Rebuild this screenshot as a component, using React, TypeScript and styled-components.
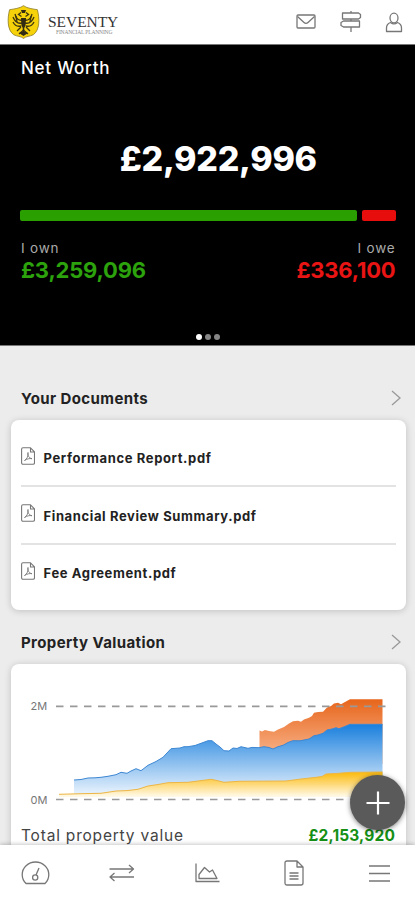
import React from "react";
import styled, { createGlobalStyle } from "styled-components";

const Global = createGlobalStyle`
  * { box-sizing: border-box; }
  body { margin: 0; background: #ececec; font-family: Inter, "Liberation Sans", sans-serif; }
  svg { display: block; flex: none; }
`;

const Screen = styled.div`
  position: relative;
  width: 415px;
  height: 900px;
  display: flex;
  flex-direction: column;
  overflow: hidden;
  background: #ececec;
`;

const Header = styled.header`
  height: 45px;
  flex: none;
  display: flex;
  justify-content: space-between;
  padding: 0 12px 0 7px;
  background: #fff;
  border-bottom: 1px solid #777;
`;

const Brand = styled.div`
  display: flex;
  gap: 8px;
  padding-top: 5px;
`;

const BrandText = styled.div`
  display: flex;
  flex-direction: column;
  padding-top: 8px;
  font-family: "Liberation Serif", serif;
  white-space: nowrap;
`;

const BrandName = styled.span`
  font-size: 15.5px;
  line-height: 17px;
  letter-spacing: -0.05px;
  color: #333;
`;

const BrandTagline = styled.span`
  padding-left: 8px;
  font-size: 5.5px;
  line-height: 5px;
  letter-spacing: -0.15px;
  color: #888;
`;

const HeaderIcons = styled.div`
  display: flex;
  align-items: flex-start;
  gap: 23.5px;
  padding-top: 10px;
`;

const Hero = styled.section`
  height: 301px;
  flex: none;
  display: flex;
  flex-direction: column;
  padding: 13px 19.5px 0 20px;
  background: #000;
  color: #fff;
  border-bottom: 1px solid #777;
`;

const Title = styled.h1`
  margin: 0 0 0 1px;
  font-size: 17px;
  line-height: 20px;
  font-weight: 500;
  letter-spacing: 0.75px;
`;

const NetWorth = styled.div`
  margin-top: 61px;
  padding-left: 21px;
  text-align: center;
  font-size: 34px;
  line-height: 40px;
  font-weight: 800;
  letter-spacing: -0.3px;
`;

const Split = styled.div`
  display: flex;
  gap: 5px;
  height: 11px;
  margin-top: 31px;
`;

const Share = styled.div<{ $weight: number; $color: string }>`
  flex: ${(p) => p.$weight} 0 0;
  border-radius: 2px;
  background: ${(p) => p.$color};
`;

const Totals = styled.div`
  display: flex;
  justify-content: space-between;
  margin: 19px 0 0 1px;
`;

const Total = styled.div<{ $align: "left" | "right" }>`
  display: flex;
  flex-direction: column;
  text-align: ${(p) => p.$align};
`;

const TotalLabel = styled.span`
  font-size: 13.5px;
  line-height: 17px;
  letter-spacing: 0.8px;
  color: #aaa;
`;

const TotalValue = styled.span<{ $color: string }>`
  font-size: 22px;
  line-height: 26px;
  font-weight: 700;
  letter-spacing: -0.2px;
  color: ${(p) => p.$color};
`;

const Dots = styled.div`
  display: flex;
  justify-content: center;
  gap: 3px;
  margin-top: 51px;
`;

const Dot = styled.i<{ $active?: boolean }>`
  width: 6px;
  height: 6px;
  border-radius: 50%;
  background: ${(p) => (p.$active ? "#fff" : "#858585")};
`;

const Content = styled.main`
  flex: 1;
  min-height: 0;
  padding: 40px 9.5px 0 10.5px;
  overflow: hidden;
`;

const SectionHead = styled.div`
  display: flex;
  align-items: center;
  justify-content: space-between;
  height: 24px;
  padding: 0 5px 0 10.5px;
  margin-bottom: 10px;
`;

const SectionTitle = styled.h2`
  margin: 0;
  font-size: 15px;
  font-weight: 700;
  letter-spacing: 0.4px;
  color: #222;
`;

const Card = styled.div<{ $height: number }>`
  height: ${(p) => p.$height}px;
  margin-bottom: 20px;
  padding: 0 10px;
  border-radius: 8px;
  background: #fff;
  box-shadow: 0 1px 7px rgba(0, 0, 0, 0.19);
`;

const DocumentList = styled(Card)`
  padding-top: 9.5px;
`;

const DocumentRow = styled.div`
  display: flex;
  align-items: center;
  gap: 9px;
  height: 57.5px;
  border-bottom: 2px solid #e3e3e3;
  &:last-child { border-bottom-color: transparent; }
  svg { margin-top: -3px; }
`;

const DocumentName = styled.span`
  margin-top: 2px;
  font-size: 13px;
  font-weight: 700;
  letter-spacing: 0.62px;
  color: #222;
`;

const ChartBox = styled.div`
  height: 158px;
  margin: 0 -10px;
`;

const AxisLabel = styled.text`
  font: 11px Inter, sans-serif;
  fill: #777;
`;

const ValueRow = styled.div`
  display: flex;
  justify-content: space-between;
  padding: 4px 0.5px 0;
  font-size: 15.5px;
  line-height: 20px;
  color: #444;
`;

const ValueLabel = styled.span`
  letter-spacing: 0.8px;
`;

const Value = styled.strong`
  font-size: 15.5px;
  font-weight: 700;
  letter-spacing: 0.15px;
  color: #159015;
`;

const AddButton = styled.button`
  position: absolute;
  left: 350px;
  top: 775px;
  width: 55px;
  height: 55px;
  padding: 0;
  border: 0;
  border-radius: 50%;
  display: grid;
  place-items: center;
  background: #5a5a5a;
  box-shadow: 0 1px 5px rgba(0, 0, 0, 0.5);
`;

const Nav = styled.nav`
  height: 55px;
  flex: none;
  display: grid;
  grid-template-columns: repeat(5, 86px);
  justify-content: center;
  place-items: center;
  background: #fff;
  box-shadow: 0 -1px 4px rgba(0, 0, 0, 0.22);
`;

const Line = ({ w, h, sw = 1.3, color = "#777", children }: {
  w: number; h: number; sw?: number; color?: string; children: React.ReactNode;
}) => (
  <svg width={w} height={h} viewBox={`0 0 ${w} ${h}`} fill="none" stroke={color}
    strokeWidth={sw} strokeLinejoin="round">{children}</svg>
);

const Crest = () => (
  <svg width="33" height="34" viewBox="0 0 33 34">
    <path d="M16.5.7C13 3.3 7 4 2.6 4.7.2 14 .3 25 6.5 29.6c3.5 2 7.5 1.5 10 3.8 2.5-2.3 6.5-1.800 10-3.800C32.700 25 32.800 14 30.400 4.700 26 4 20 3.300 16.500.7Z" fill="#f5d20a" stroke="#8b7a22" strokeWidth=".8" />
    <g fill="none" stroke="#3d3510" strokeWidth="1.3">
      <path d="M14 7.500l-2.500 2 3 2M19 7.500l2.500 2-3 2M16 15C12 16 9 14 8 9M17 15c4 1 7-1 8-6M15 18c-4 1-7-1-9-6M18 18c4 1 7-1 9-6M14 21c-4 1-6 0-8-4M19 21c4 1 6 0 8-4" />
      <path d="M14 22l-4 4M19 22l4 4M12 29l4.500-4 4.500 4M9 11l1 6M24 11l-1 6" />
    </g>
    <path d="M14 5h5l-1 3h-3zM14 13h5l-.5 8-2 3-2-3zM15.700 23h1.600v5h-1.600zM12 28l4.500-2 4.500 2-4.500 3z" fill="#302b12" />
  </svg>
);

const Pdf = () => (
  <Line w={14} h={18} sw={1.1}>
    <path d="M2 .8h7.500l4 4v11q0 1.500-1.500 1.500H2Q.6 17.300.6 15.800V2.200Q.6.800 2 .8ZM9.500 1v4h4" />
    <path d="M3.500 13.500C6 12 7.500 9 7 5.500c-.8 3 1.500 6 4 6.200-2-.5-5 .1-7.500 1.800Z" strokeWidth=".9" />
  </Line>
);

const Chevron = () => (
  <Line w={10} h={16} color="#999"><path d="M1 1l8 7-8 7" strokeLinejoin="miter" /></Line>
);

const orangeTop = "248.500,66.5 251,67.5 254,66 258,67 263,67.7 267,65.5 273,63 278,59.5 282,57.3 287,56.8 290,57.7 293,55.5 298,53.7 301,52 303,48.7 307,48 312,47.7 316,43.5 320,42 323,39.5 327,38.7 330,40.3 334,38 339,35.3 371.500,35.3";
const blueTop = "63,116 70,115.5 77,114 84,113.8 90,113.3 97,112.3 105,110.7 110,108.3 116,109.3 120,107 125,104.7 130,106.7 137,101.3 145,97.5 152,93.3 160,84.7 169,84 173,82.7 177,82.7 184,81.5 190,79.3 197,76.7 201,76.7 205,80 209,83 213,86.7 218,87 222,84 226,84.5 230,82.7 237,84.3 241,83.4 248,83.7 253,82.7 258,83.5 262,85 267,82.7 272,81.3 277,78.5 282,76.7 289,76.8 298,75 303,71.7 307,71 312,69.3 316,66 321,65 325,63.7 328,64.7 333,62.8 339,60.3 371.500,60.3";
const goldTop = "48,130.3 70,129.7 90,129.3 105,127 116,126.6 127,125.3 137,122 147,120.5 157,118.7 177,118.3 187,117 200,115.3 205,116.3 213,118.3 228,117.3 275,117 290,115 305,113.3 311,112.5 315,110 327,109.3 340,108.3 371.500,108";

const gradients = [
  { id: "orange", from: "#e7651b", to: "#f6aa7d", y1: 35, y2: 85 },
  { id: "blue", from: "#197fdd", to: "#e2effc", y1: 60, y2: 128 },
  { id: "gold", from: "#fbb90a", to: "#fff8e4", y1: 108, y2: 132 },
];

const Chart = () => (
  <svg width="395" height="158" viewBox="0 0 395 158">
    <defs>
      {gradients.map((g) => (
        <linearGradient key={g.id} id={g.id} gradientUnits="userSpaceOnUse" x1="0" x2="0" y1={g.y1} y2={g.y2}>
          <stop stopColor={g.from} /><stop offset="1" stopColor={g.to} />
        </linearGradient>
      ))}
    </defs>
    <polygon points={`248.5,100 ${orangeTop} 371.5,100`} fill="url(#orange)" />
    <polygon points={`63,131 ${blueTop} 371.5,131`} fill="url(#blue)" />
    <polyline points={blueTop} fill="none" stroke="#3d87d3" strokeWidth="1" />
    <polygon points={`48,133 ${goldTop} 371.5,133`} fill="url(#gold)" />
    <polyline points={goldTop} fill="none" stroke="#edb646" strokeWidth="1" />
    <path d="M45 42.3H376M45 135.5H376" stroke="#999" strokeWidth="1.7" strokeDasharray="7.5 6.5" fill="none" />
    <AxisLabel x="19.5" y="46.3">2M</AxisLabel>
    <AxisLabel x="19.5" y="139.5">0M</AxisLabel>
  </svg>
);

const documents = ["Performance Report.pdf", "Financial Review Summary.pdf", "Fee Agreement.pdf"];

export default function App() {
  return (
    <Screen>
      <Global />
      <Header>
        <Brand>
          <Crest />
          <BrandText>
            <BrandName>SEVENTY</BrandName>
            <BrandTagline>FINANCIAL PLANNING</BrandTagline>
          </BrandText>
        </Brand>
        <HeaderIcons>
          <Line w={20} h={24}><rect x="1" y="5" width="18" height="13" rx="1" /><path d="M1.5 6.5l6.5 6q2 1.8 4 0l6.5-6" /></Line>
          <Line w={22} h={24}><path d="M11 1v2M11 9v2M11 17v5M2.500 3h16l2 1.500v3L18.500 9h-16ZM19.500 11h-16L1 12.500v3L3.500 17h16Z" /></Line>
          <Line w={18} h={24}><ellipse cx="9" cy="8" rx="4" ry="4.8" /><path d="M5.5 12.5Q1.5 14 1.5 18v3.500h15V18q0-4-4-5.500-3.500 2.700-7 0Z" /></Line>
        </HeaderIcons>
      </Header>
      <Hero>
        <Title>Net Worth</Title>
        <NetWorth>£2,922,996</NetWorth>
        <Split>
          <Share $weight={337} $color="#2aa000" />
          <Share $weight={34} $color="#e80d0d" />
        </Split>
        <Totals>
          <Total $align="left">
            <TotalLabel>I own</TotalLabel>
            <TotalValue $color="#2ca20d">£3,259,096</TotalValue>
          </Total>
          <Total $align="right">
            <TotalLabel>I owe</TotalLabel>
            <TotalValue $color="#e91414">£336,100</TotalValue>
          </Total>
        </Totals>
        <Dots><Dot $active /><Dot /><Dot /></Dots>
      </Hero>
      <Content>
        <SectionHead><SectionTitle>Your Documents</SectionTitle><Chevron /></SectionHead>
        <DocumentList $height={190}>
          {documents.map((name) => (
            <DocumentRow key={name}>
              <Pdf />
              <DocumentName>{name}</DocumentName>
            </DocumentRow>
          ))}
        </DocumentList>
        <SectionHead><SectionTitle>Property Valuation</SectionTitle><Chevron /></SectionHead>
        <Card $height={220}>
          <ChartBox><Chart /></ChartBox>
          <ValueRow><ValueLabel>Total property value</ValueLabel><Value>£2,153,920</Value></ValueRow>
        </Card>
      </Content>
      <Nav>
        <Line w={29} h={28}><path d="M5 24.500Q1.200 21 1.200 15.500a13.300 12.500 0 0 1 26.600 0q0 5.500-3.800 9Z" /><circle cx="14.200" cy="18.500" r="2.600" /><path d="M15 16l3-7" /></Line>
        <Line w={26} h={20}><path d="M.5 6h24M20 2l4.500 4-4.500 4M25 14H1M5.500 10L1 14l4.500 4" /></Line>
        <Line w={25} h={22}><path d="M1 1.500v18h23.500M4 16.500v-4L9.500 5.500l5 4.500 3-2 4.500 8.500Z" /></Line>
        <Line w={20} h={26}><path d="M3 1h10l6 6v16q0 2-2 2H3q-2 0-2-2V3q0-2 2-2ZM13 1v6h6M5.500 13h9M5.500 16h9M5.500 19h9" /></Line>
        <Line w={21} h={20} sw={1.5}><path d="M0 3h21M0 10.500h21M0 18h21" /></Line>
      </Nav>
      <AddButton aria-label="Add">
        <Line w={24} h={24} sw={2.2} color="#fff"><path d="M12 .5v23M.5 12h23" /></Line>
      </AddButton>
    </Screen>
  );
}
